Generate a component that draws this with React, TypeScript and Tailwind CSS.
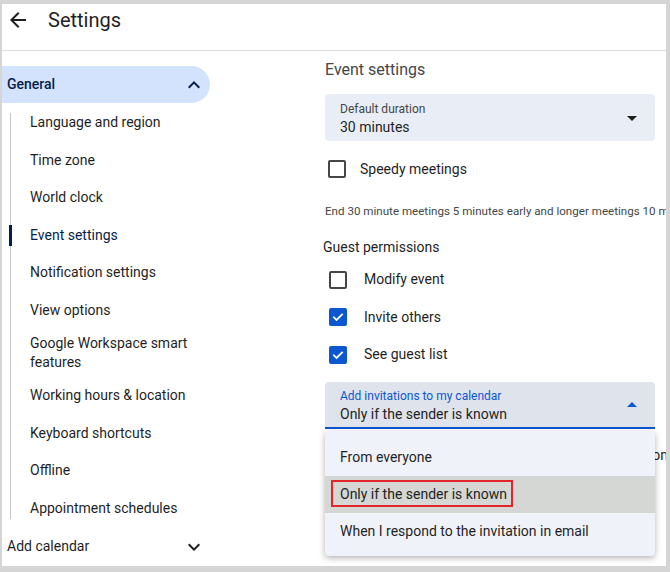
import React from "react";

const ArrowLeft = () => (
  <svg width="24" height="24" viewBox="0 0 24 24" fill="#1f1f1f">
    <path d="M20 11H7.83l5.59-5.59L12 4l-8 8 8 8 1.41-1.41L7.83 13H20v-2z" />
  </svg>
);
const ExpandLess = () => (
  <svg width="24" height="24" viewBox="0 0 24 24" fill="#041e49">
    <path d="M12 8l-6 6 1.41 1.41L12 10.83l4.59 4.58L18 14z" />
  </svg>
);
const ExpandMore = () => (
  <svg width="24" height="24" viewBox="0 0 24 24" fill="#1f1f1f">
    <path d="M16.59 8.59L12 13.17 7.41 8.59 6 10l6 6 6-6z" />
  </svg>
);
const DropDown = () => (
  <svg width="24" height="24" viewBox="0 0 24 24" fill="#1f1f1f">
    <path d="M7 10l5 5 5-5z" />
  </svg>
);
const DropUp = () => (
  <svg width="24" height="24" viewBox="0 0 24 24" fill="#0b57d0">
    <path d="M7 14l5-5 5 5z" />
  </svg>
);

const Checkbox = ({ checked }: { checked: boolean }) =>
  checked ? (
    <div className="w-[18px] h-[18px] rounded-[2px] bg-[#0b57d0] flex items-center justify-center">
      <svg width="14" height="14" viewBox="0 0 24 24" fill="none" stroke="white" strokeWidth="3" strokeLinecap="square">
        <path d="M5 12.5l4.5 4.5L19 7.5" />
      </svg>
    </div>
  ) : (
    <div className="w-[18px] h-[18px] rounded-[2px] border-2 border-[#444746]" />
  );

const items = [
  "Language and region",
  "Time zone",
  "World clock",
  "Event settings",
  "Notification settings",
  "View options",
  "Google Workspace smart features",
  "Working hours & location",
  "Keyboard shortcuts",
  "Offline",
  "Appointment schedules",
];

export default function App() {
  return (
    <div className="w-[670px] h-[572px] bg-[#d5d5d5] pt-[4px] pl-[2px] pr-[4px] pb-[6px] font-['Roboto',sans-serif] text-[#1f1f1f]">
      <div className="relative w-full h-full bg-white overflow-hidden flex flex-col">
        <div className="h-[47px] shrink-0 border-b border-[#dadce0] flex items-center">
          <div className="ml-[4px] mt-[-14px]">
            <ArrowLeft />
          </div>
          <div className="ml-[18px] mt-[-14px] text-[20px] leading-[28px] text-[#1f1f1f]">Settings</div>
        </div>
        <div className="flex flex-1">
          <div className="w-[321px] shrink-0 pt-[15px]">
            <div className="h-[37px] w-[208px] rounded-r-full bg-[#d3e3fd] flex items-center justify-between pl-[5px] pr-[4px]">
              <span className="text-[14px] font-medium text-[#041e49]">General</span>
              <ExpandLess />
            </div>
            <div className="relative pt-[1px]">
              <div className="absolute left-[8px] top-[10px] bottom-[8px] w-px bg-[#c4c7c5]" />
              {items.map((it) =>
                it.startsWith("Google") ? (
                  <div key={it} className="relative pl-[28px] pr-[20px] py-[5px] text-[14px] leading-[19px] text-[#1f1f1f] w-[210px]">
                    Google Workspace smart
                    <br />
                    features
                  </div>
                ) : (
                  <div key={it} className="relative pl-[28px] h-[37.5px] flex items-center text-[14px] text-[#1f1f1f]">
                    {it === "Event settings" && (
                      <div className="absolute left-[7px] top-[8px] h-[21px] w-[3px] bg-[#041e49]" />
                    )}
                    <span className={it === "Event settings" ? "text-[#041e49]" : ""}>{it}</span>
                  </div>
                )
              )}
            </div>
            <div className="h-[39px] w-[208px] flex items-center justify-between pl-[5px] pr-[4px]">
              <span className="text-[14px]">Add calendar</span>
              <ExpandMore />
            </div>
          </div>
          <div className="relative flex-1 flex flex-col pt-[7px]">
            <div className="ml-[2px] text-[16px] leading-[24px] text-[#444746]">Event settings</div>
            <div className="relative ml-[2px] mt-[12px] h-[47px] w-[330px] shrink-0 rounded-[4px] bg-[#e9eef6] px-[15px] pt-[7px]">
              <div className="text-[12px] leading-[16px] text-[#444746]">Default duration</div>
              <div className="text-[14px] leading-[20px] text-[#1f1f1f]">30 minutes</div>
              <div className="absolute right-[11px] top-[12px]">
                <DropDown />
              </div>
            </div>
            <div className="mt-[8px] h-[40px] flex items-center">
              <div className="ml-[5px]">
                <Checkbox checked={false} />
              </div>
              <span className="ml-[14px] text-[14px] text-[#1f1f1f]">Speedy meetings</span>
            </div>
            <div className="ml-[2px] mt-[14px] text-[11.6px] leading-[16px] whitespace-nowrap text-[#444746]">
              End 30 minute meetings 5 minutes early and longer meetings 10 minutes early
            </div>
            <div className="mt-[18px] text-[14px] leading-[20px] text-[#1f1f1f]">Guest permissions</div>
            <div className="mt-[4px] flex flex-col">
              {[
                ["Modify event", false],
                ["Invite others", true],
                ["See guest list", true],
              ].map(([label, c]) => (
                <div key={label as string} className="h-[37.5px] flex items-center">
                  <div className="ml-[6px]">
                    <Checkbox checked={c as boolean} />
                  </div>
                  <span className="ml-[17px] text-[14px] text-[#1f1f1f]">{label as string}</span>
                </div>
              ))}
            </div>
            <div className="relative ml-[2px] mt-[8px] h-[47px] w-[330px] shrink-0 rounded-t-[4px] bg-[#dfe4ec] border-b-2 border-[#0b57d0] px-[15px] pt-[6px]">
              <div className="text-[12px] leading-[16px] text-[#0b57d0]">Add invitations to my calendar</div>
              <div className="text-[14px] leading-[20px] text-[#1f1f1f]">Only if the sender is known</div>
              <div className="absolute right-[11px] top-[11px]">
                <DropUp />
              </div>
            </div>
            <div className="h-[54px] w-[345px] flex items-center justify-end text-[14px] whitespace-nowrap text-[#1f1f1f]">
              Show event notification
            </div>
            <div className="absolute left-[2px] top-[380px] w-[330px] h-[125px] rounded-[4px] bg-[#eff2f9] shadow-[0_2px_6px_rgba(0,0,0,0.3)] pt-[8px] text-[14px] text-[#1f1f1f]">
              <div className="h-[37px] flex items-center pl-[15px]">From everyone</div>
              <div className="relative h-[37px] flex items-center pl-[15px] bg-[#d5d7d4]">
                <div className="absolute left-[6px] top-[4px] w-[182px] h-[27px] border-2 border-[#e3242b]" />
                Only if the sender is known
              </div>
              <div className="h-[37px] flex items-center pl-[15px]">When I respond to the invitation in email</div>
            </div>
          </div>
        </div>
      </div>
    </div>
  );
}
